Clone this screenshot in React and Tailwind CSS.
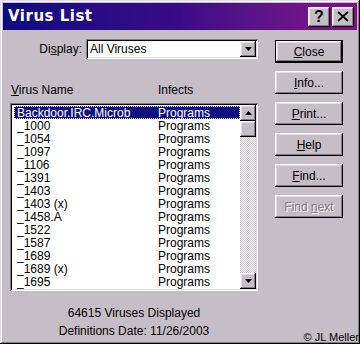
import React from 'react';

const viruses = [
    'Backdoor.IRC.Microb',
    '_1000',
    '_1054',
    '_1097',
    '_1106',
    '_1391',
    '_1403',
    '_1403 (x)',
    '_1458.A',
    '_1522',
    '_1587',
    '_1689',
    '_1689 (x)',
    '_1695',
];

const bevel = 'shadow-[inset_-1px_-1px_#000,inset_1px_1px_#fff,inset_-2px_-2px_#847c84,inset_2px_2px_#e4dce4]';
const sunken = 'shadow-[inset_1px_1px_#847c84,inset_-1px_-1px_#fff,inset_2px_2px_#000,inset_-2px_-2px_#e4dce4]';

function Btn({ children, primary, disabled }) {
    return (
        <div className={`h-[23px] w-[68px] ${primary ? 'border border-black' : ''}`}>
            <div className={`h-full w-full flex items-center justify-center bg-[#c6bec6] ${bevel} ${disabled ? 'text-[#847c84] [text-shadow:1px_1px_#fff]' : 'text-black'}`}>
                {children}
            </div>
        </div>
    );
}

function Arrow({ down }) {
    return (
        <svg width="7" height="4" viewBox="0 0 7 4">
            <path d={down ? 'M0 0h7L3.5 4z' : 'M0 4h7L3.5 0z'} fill={'#000'} />
        </svg>
    );
}

export default function App() {
    return (
        <div
            className="relative w-[360px] h-[344px] bg-[#c6bec6] overflow-hidden text-[12px] text-black shadow-[inset_-1px_-1px_#000,inset_1px_1px_#e4dce4,inset_-2px_-2px_#847c84,inset_2px_2px_#fff]"
            style={{ fontFamily: '"Liberation Sans", Arial, sans-serif' }}
        >
            <div className="mx-[3px] mt-[3px] h-[27px] flex items-center justify-between pl-[5px] pr-[3px] bg-gradient-to-r from-[#0c0a80] via-[#3a0a86] to-[#880a8a]">
                <span className="text-white font-bold tracking-[0.5px]" style={{ fontFamily: 'Verdana, "DejaVu Sans", sans-serif', fontSize: '15px' }}>Virus List</span>
                <div className="flex gap-[2px]">
                    <div className={`w-[22px] h-[20px] flex items-center justify-center bg-[#c6bec6] ${bevel} font-bold text-[16px]`}>?</div>
                    <div className={`w-[22px] h-[20px] flex items-center justify-center bg-[#c6bec6] ${bevel}`}>
                        <svg width="12" height="11" viewBox="0 0 12 11">
                            <path d="M1 1L11 10M11 1L1 10" stroke="#000" strokeWidth="1.8" />
                        </svg>
                    </div>
                </div>
            </div>

            <div className="flex">
                <div className="w-[258px] pl-[10px]">
                    <div className="mt-[9px] flex items-center h-[20px]">
                        <span className="w-[76px] text-right pr-[4px]">Di<u>s</u>play:</span>
                        <div className={`flex-1 h-[20px] bg-white ${sunken} flex items-center pl-[4px] pr-[2px]`}>
                            <span className="flex-1">All Viruses</span>
                            <div className={`w-[16px] h-[16px] flex items-center justify-center bg-[#c6bec6] ${bevel}`}>
                                <Arrow down />
                            </div>
                        </div>
                    </div>

                    <div className="mt-[23px] flex h-[16px] items-center">
                        <span className="w-[148px] pl-[1px]"><u>V</u>irus Name</span>
                        <span>Infects</span>
                    </div>

                    <div className={`mt-[5px] h-[188px] bg-white ${sunken} p-[2px] flex`}>
                        <div className="flex-1 pt-[1px] pl-[2px]">
                            {viruses.map((v, i) => (
                                <div
                                    key={v}
                                    className={`h-[13px] flex items-center leading-none ${i === 0 ? 'bg-[#10107e] text-white outline outline-1 outline-dotted outline-[#fff] -outline-offset-1' : ''}`}
                                >
                                    <span className="w-[144px] pl-[3px]">{v}</span>
                                    <span>Programs</span>
                                </div>
                            ))}
                        </div>
                        <div className="w-[16px] flex flex-col bg-[repeating-conic-gradient(#c6bec6_0_25%,#fff_0_50%)] bg-[length:2px_2px]">
                            <div className={`h-[16px] flex items-center justify-center bg-[#c6bec6] ${bevel}`}><Arrow /></div>
                            <div className={`h-[16px] bg-[#c6bec6] ${bevel}`} />
                            <div className="flex-1" />
                            <div className={`h-[16px] flex items-center justify-center bg-[#c6bec6] ${bevel}`}><Arrow down /></div>
                        </div>
                    </div>

                    <div className="mt-[13px] flex flex-col items-center leading-[18px]">
                        <span>64615 Viruses Displayed</span>
                        <span>Definitions Date: 11/26/2003</span>
                    </div>
                </div>

                <div className="ml-[17px] mt-[10px] flex flex-col gap-[8px]">
                    <Btn primary><span><u>C</u>lose</span></Btn>
                    <Btn><span><u>I</u>nfo...</span></Btn>
                    <Btn><span><u>P</u>rint...</span></Btn>
                    <Btn><span><u>H</u>elp</span></Btn>
                    <Btn><span><u>F</u>ind...</span></Btn>
                    <Btn disabled><span>Find <u>n</u>ext</span></Btn>
                </div>
            </div>

            <span className="absolute right-[1px] bottom-[1px] text-[11px] leading-none">© JL Meller</span>
        </div>
    );
}
